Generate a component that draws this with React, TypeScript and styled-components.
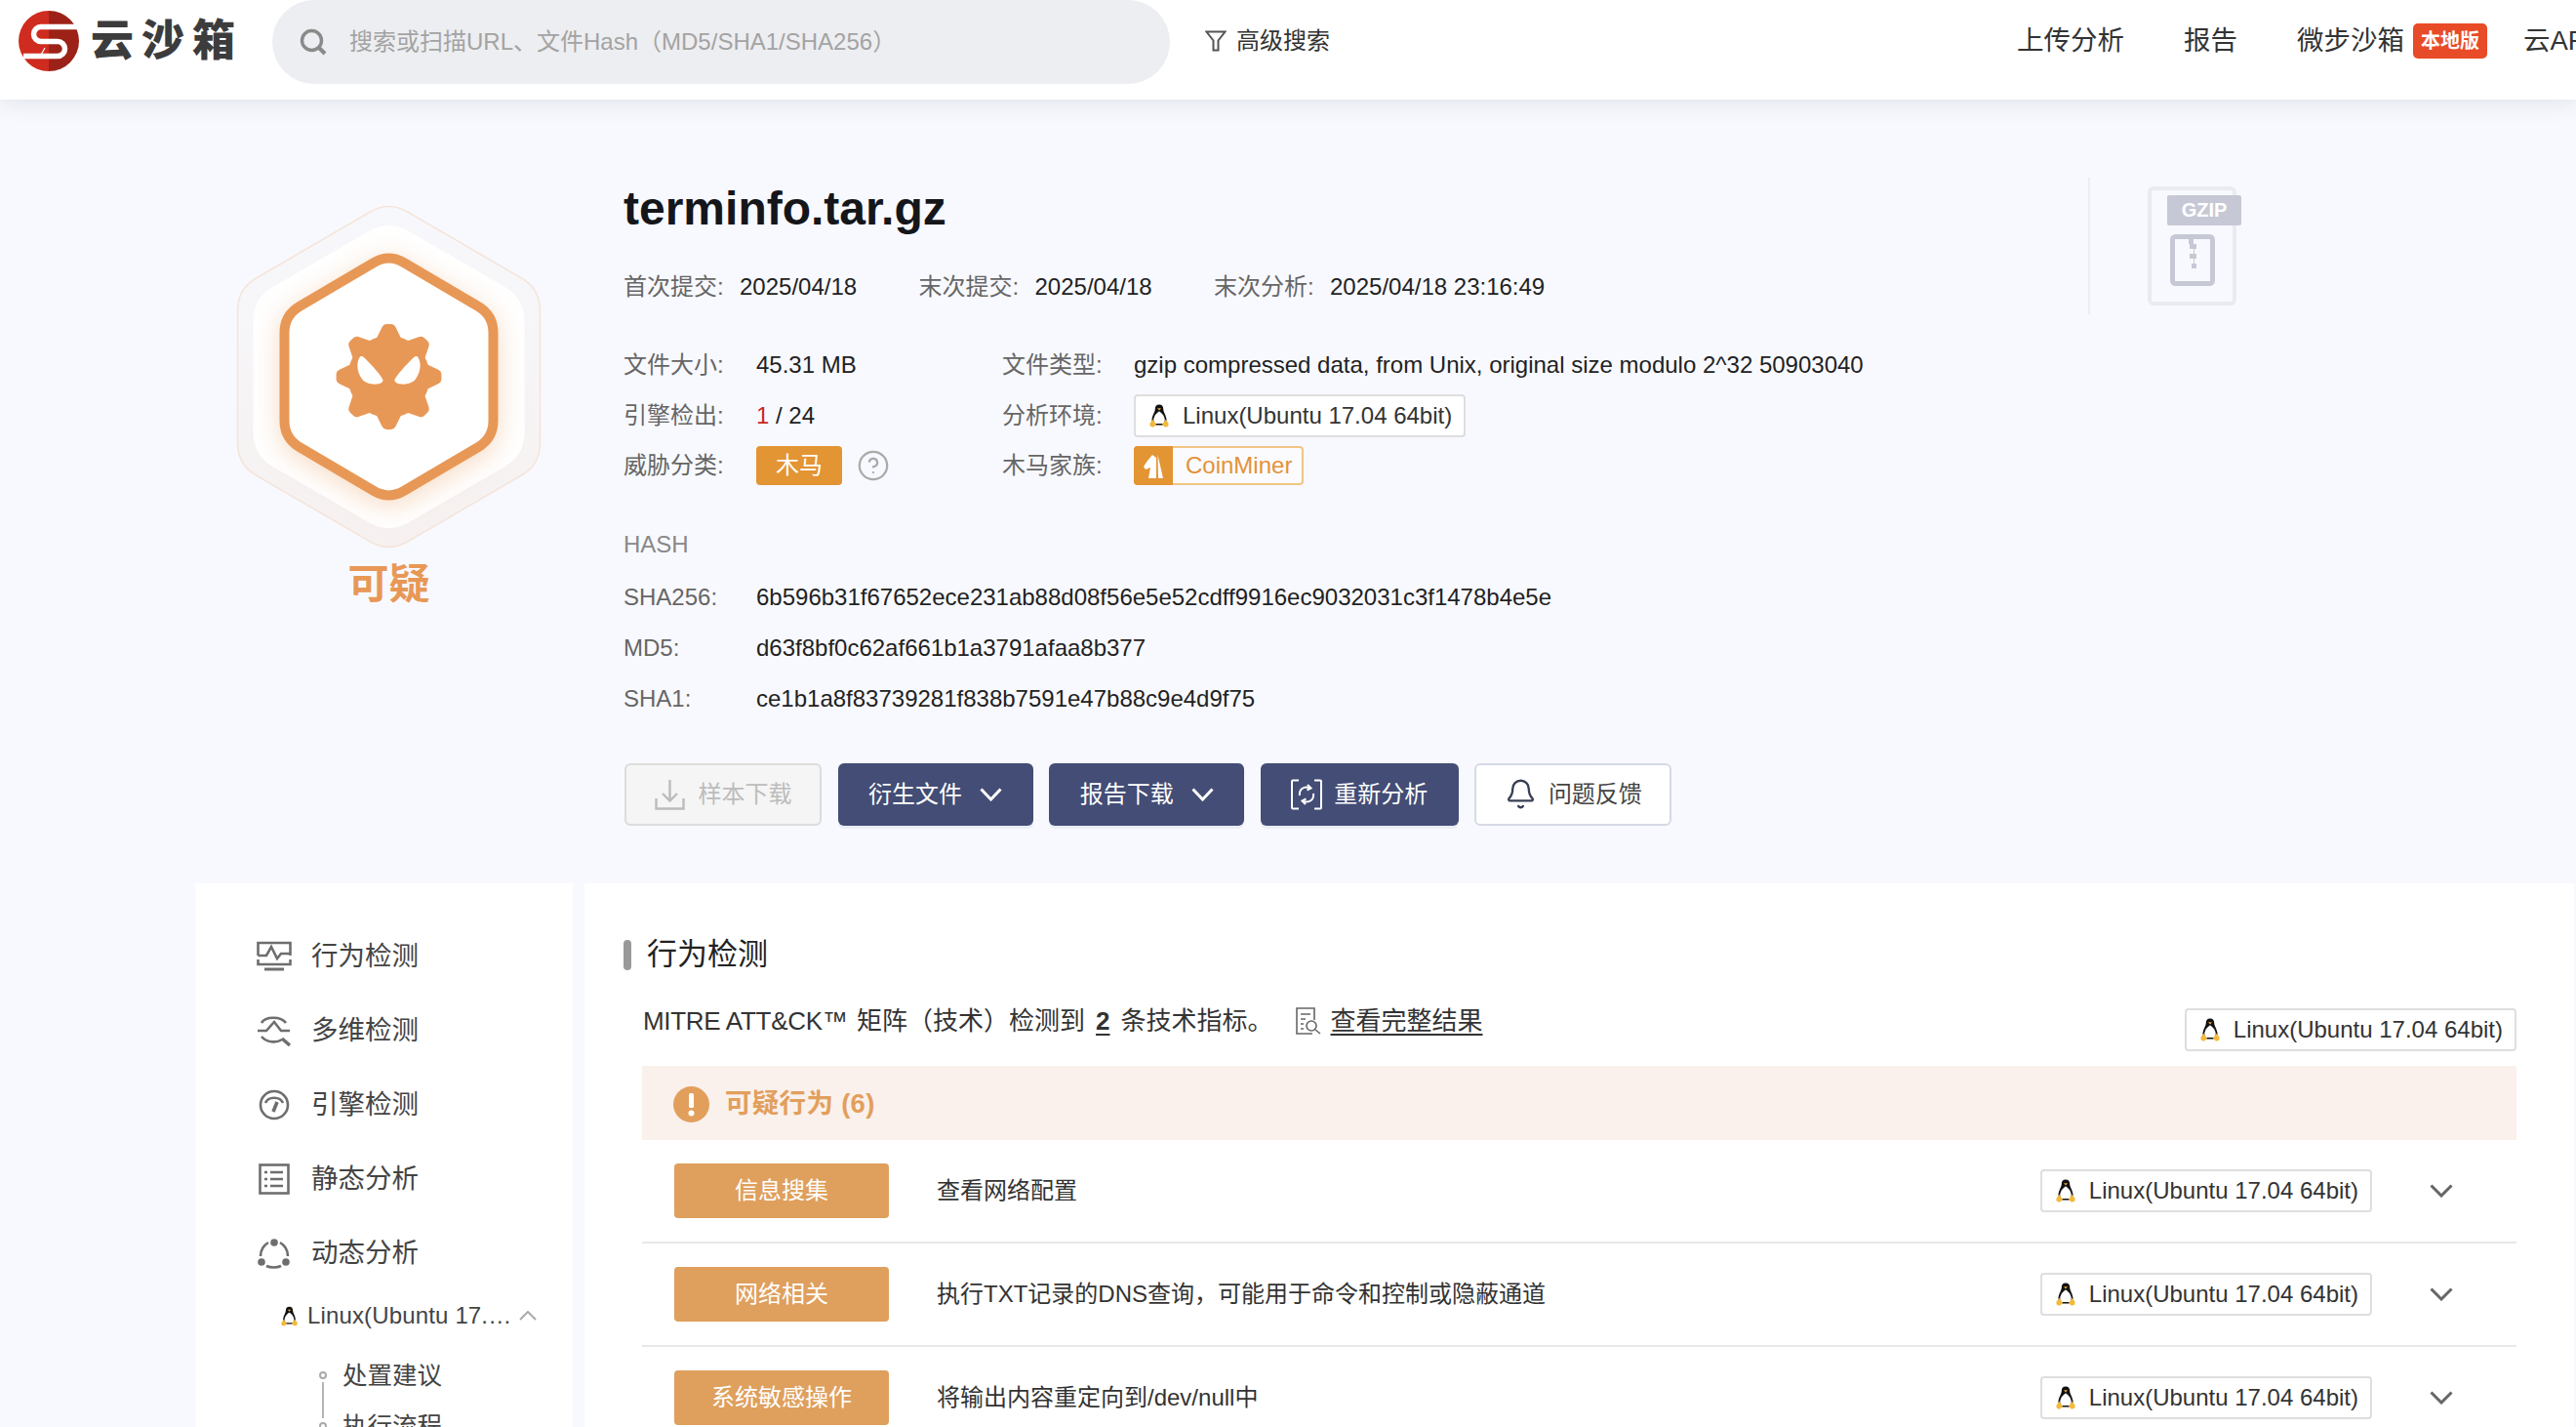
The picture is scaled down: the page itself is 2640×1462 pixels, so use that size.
import React from "react";
import styled, { createGlobalStyle } from "styled-components";
import { Bell, CircleHelp } from "lucide-react";

const Global = createGlobalStyle`
  html, body { margin: 0; padding: 0; background: #f8f9fe; }
  body { font-family: "Liberation Sans", "Noto Sans CJK SC", sans-serif; line-height: 1.25; overflow: hidden; }
  * { box-sizing: border-box; }
`;

const Page = styled.div`
  width: 2640px; height: 1462px; overflow: hidden; background: #f8f9fe; color: #222;
`;

/* ---------- header ---------- */
const Header = styled.header`
  position: relative; z-index: 2; height: 102px; background: #fff; display: flex; align-items: flex-start;
  padding-left: 19px; box-shadow: 0 2px 22px rgba(50, 60, 85, 0.13);
`;
const LogoMark = styled.svg`width: 62px; height: 62px; margin-top: 11px; flex: none;`;
const LogoText = styled.div`
  margin-left: 12px; margin-top: 12px; font-size: 44px; line-height: 60px; font-weight: 900; letter-spacing: 8px; color: #3c3c3c; white-space: nowrap; flex: none; width: 148px;
`;
const Search = styled.div`
  margin-left: 38px; width: 920px; height: 86px; border-radius: 43px; background: #edeef1; display: flex; align-items: center;
  padding-left: 28px; color: #a3a3a3; font-size: 24px; flex: none;
`;
const SearchIcon = styled.svg`width: 28px; height: 28px; margin-right: 23px; flex: none;`;
const Advanced = styled.div`
  margin-left: 36px; display: flex; align-items: center; gap: 10px; height: 84px; font-size: 24px; color: #333; flex: none; white-space: nowrap;
`;
const FunnelIcon = styled.svg`width: 22px; height: 22px; flex: none;`;
const Nav = styled.nav`
  margin-left: 704px; display: flex; align-items: center; height: 84px; gap: 61px; font-size: 27.5px; color: #333; flex: none; white-space: nowrap;
`;
const NavGroup = styled.div`display: flex; align-items: center; gap: 9px;`;
const LocalBadge = styled.span`
  width: 76px; height: 36px; border-radius: 5px; background: #e84b27; color: #fff; font-size: 20px; font-weight: 700;
  display: inline-flex; align-items: center; justify-content: center;
`;
const LastNav = styled.span`margin-left: -24px;`;

/* ---------- hero ---------- */
const Hero = styled.section`
  display: flex; align-items: flex-start; padding: 82px 0 59px 243px; height: 803px;
`;
const Verdict = styled.div`
  width: 311px; margin-top: 26px; flex: none; display: flex; flex-direction: column; align-items: center;
`;
const HexSvg = styled.svg`width: 311px; height: 352px; overflow: visible;`;
const VerdictText = styled.div`
  font-size: 42px; line-height: 56px; font-weight: 700; color: #e89856; margin-top: 9px;
`;
const Info = styled.div`width: 1501px; margin-left: 85px; flex: none;`;
const Title = styled.h1`
  margin: 0; font-size: 48px; line-height: 60px; font-weight: 700; color: #14161a;
`;
const MetaRow = styled.div`display: flex; margin-top: 35px; height: 30px; align-items: center; font-size: 24px;`;
const MetaItem = styled.div`display: flex; width: 302.5px; flex: none; white-space: nowrap;`;
const MetaLabel = styled.span`width: 119px; color: #666; flex: none;`;
const Value = styled.span`color: #222; white-space: nowrap;`;
const InfoGrid = styled.div`
  margin-top: 39.6px; display: grid; grid-template-columns: 136px 252px 135px 1fr; grid-auto-rows: 51.5px; align-items: center; font-size: 24px;
`;
const Label = styled.span`color: #666; white-space: nowrap;`;
const Danger = styled.span`color: #c8281e;`;
const TypeRow = styled.div`display: flex; align-items: center; gap: 15px;`;
const TypeTag = styled.span`
  width: 88px; height: 40px; border-radius: 4px; background: #e39433; color: #fff; display: inline-flex; align-items: center; justify-content: center;
`;
const EnvTag = styled.span`
  display: inline-flex; align-items: center; gap: 14px; height: 44px; padding: 0 12px 0 14px; background: #fff; border: 2px solid #dedede; border-radius: 4px;
  color: #333; font-size: 24px; white-space: nowrap; flex: none; width: fit-content;
`;
const Penguin = styled.svg`width: 20px; height: 24px; flex: none;`;
const FamilyTag = styled.span`
  display: inline-flex; align-items: stretch; height: 40px; width: fit-content; background: #fbfbfd; border: 2px solid #f0c585; border-radius: 4px; color: #e3923a;
`;
const FamilyIcon = styled.span`
  width: 40px; margin: -2px 0 -2px -2px; background: #e39433; border-radius: 4px 0 0 4px; display: flex; align-items: center; justify-content: center;
`;
const FamilyName = styled.span`padding: 0 10px 0 13px; display: flex; align-items: center;`;
const HashTitle = styled.div`margin-top: 28.5px; height: 52px; display: flex; align-items: center; font-size: 24px; color: #888;`;
const HashRow = styled.div`display: flex; height: 52px; align-items: center; font-size: 24px;`;
const HashRows = styled.div`margin-top: 2px;`;
const HashLabel = styled.span`width: 136px; color: #666; flex: none;`;
const Actions = styled.div`display: flex; gap: 16.6px; margin: 40.4px 0 0 1px;`;
const ActionButton = styled.button<{ $kind: "disabled" | "primary" | "outline"; $w: number; $gap: number }>`
  width: ${(p) => p.$w}px; height: 64px; border-radius: 6px; font: inherit; font-size: 24px; display: flex; align-items: center; justify-content: center; gap: ${(p) => p.$gap}px; padding: 0;
  white-space: nowrap;
  background: ${(p) => (p.$kind === "primary" ? "#434d75" : p.$kind === "disabled" ? "#f5f5f5" : "#fff")};
  color: ${(p) => (p.$kind === "primary" ? "#fff" : p.$kind === "disabled" ? "#bcbcbc" : "#444")};
  border: ${(p) => (p.$kind === "primary" ? "none" : p.$kind === "disabled" ? "2px solid #dcdcdc" : "2px solid #d6d9e6")};
  box-shadow: ${(p) => (p.$kind === "primary" ? "0 3px 0 #eaedf6" : "none")};
`;
const ButtonIcon = styled.svg`flex: none;`;
const Aside = styled.aside`
  margin-top: -2px; height: 140px; border-left: 2px solid #ecedf2; padding: 9px 0 0 59px; flex: none;
`;
const FileDoc = styled.div`
  position: relative; width: 91px; height: 122px; border: 4px solid #e9ebf1; border-radius: 6px; display: flex; justify-content: flex-start;
  padding: 45px 0 0 19px;
`;
const FileBadge = styled.span`
  position: absolute; left: 16px; top: 5px; width: 76px; height: 31px; background: #c6c9d5; color: #fff; font-size: 20px; font-weight: 700; border-radius: 2px;
  display: flex; align-items: center; justify-content: center;
`;
const ZipSvg = styled.svg`width: 46px; height: 53px;`;

/* ---------- panels ---------- */
const Main = styled.main`display: flex; gap: 12px; padding-left: 200px;`;
const Sidebar = styled.div`
  width: 387px; height: 557px; background: #fff; flex: none; padding: 37px 0 0 63px; overflow: hidden;
`;
const SideItem = styled.div`
  display: flex; align-items: center; gap: 20px; height: 76px; font-size: 27.5px; color: #444;
`;
const SideIcon = styled.svg`width: 36px; height: 32px; flex: none; fill: none; stroke: #6e6e6e; stroke-width: 2.6;`;
const EnvRow = styled.div`
  display: flex; align-items: center; height: 52px; margin-left: 25px; font-size: 24px; color: #444;
`;
const EnvRowPenguin = styled(Penguin)`width: 17px; height: 21px; margin-right: 10px;`;
const EnvRowText = styled.span`width: 217px; white-space: nowrap; letter-spacing: 0.15px; flex: none;`;
const EnvChevron = styled.svg`width: 18px; height: 10px; fill: none; stroke: #aaa; stroke-width: 2;`;
const SubList = styled.div`margin: 31px 0 0 64px;`;
const SubRow = styled.div`display: flex; height: 52px; gap: 16px; align-items: flex-start;`;
const Rail = styled.div`width: 8px; height: 100%; display: flex; flex-direction: column; align-items: center; flex: none;`;
const RailDot = styled.span`width: 8px; height: 8px; border: 2px solid #aaa; border-radius: 50%; flex: none;`;
const RailLine = styled.span`width: 2px; flex: 1; margin: 3px 0 4px; background: #b5b5b5;`;
const SubText = styled.span`font-size: 25.5px; line-height: 30px; margin-top: -11px; color: #444;`;

const Content = styled.div`
  width: 2039px; height: 557px; background: #fff; flex: none; padding: 53px 59px 0 40px; overflow: hidden;
`;
const SectionTitle = styled.h2`
  margin: 0; display: flex; align-items: center; gap: 16px; height: 40px; font-size: 31px; font-weight: 400; color: #222;
`;
const TitleBar = styled.span`width: 8px; height: 31px; border-radius: 4px; background: #999;`;
const Body = styled.div`margin: 27px 0 0 19px;`;
const Summary = styled.div`display: flex; justify-content: space-between; align-items: flex-start; height: 52px;`;
const SummaryText = styled.div`display: flex; align-items: center; height: 42px; font-size: 26px; color: #333; white-space: nowrap; padding-left: 1px;`;
const MitreName = styled.span`display: inline-block; width: 219px; letter-spacing: -0.3px;`;
const Count = styled.b`text-decoration: underline; text-underline-offset: 4px; margin: 0 11px;`;
const ReportIcon = styled.svg`width: 26px; height: 28px; margin: 0 10px 0 23px; flex: none;`;
const ReportLink = styled.span`text-decoration: underline; text-underline-offset: 4px;`;
const TopEnv = styled.div`margin-top: 8px;`;
const Band = styled.div`
  margin-top: 15px; height: 76px; background: #faf1ec; padding: 2px 0 0 32px; display: flex; align-items: center; gap: 16px;
  color: #e29f5c; font-size: 27.5px; font-weight: 700; letter-spacing: 0.3px;
`;
const AlertIcon = styled.svg`width: 37px; height: 37px; flex: none;`;
const Row = styled.div`
  height: 106px; border-bottom: 2px solid #e8e8e8; display: flex; align-items: center; padding-left: 33px; flex: none;
`;
const Category = styled.span`
  width: 220px; height: 56px; border-radius: 4px; background: #df9f5d; color: #fff; font-size: 24px; flex: none;
  display: flex; align-items: center; justify-content: center;
`;
const Desc = styled.span`margin-left: 49px; flex: 1; font-size: 24px; color: #333; white-space: nowrap;`;
const RowChevron = styled.svg`width: 24px; height: 14px; margin: 0 65px 0 59px; flex: none; fill: none; stroke: #666; stroke-width: 3;`;

/* ---------- drawings ---------- */
function hexPath(W: number, H: number, d: number) {
  const v = [[0, -H], [W, -H / 2], [W, H / 2], [0, H], [-W, H / 2], [-W, -H / 2]];
  let p = "";
  v.forEach((c, i) => {
    const prev = v[(i + 5) % 6];
    const next = v[(i + 1) % 6];
    const toward = (a: number[], b: number[]) => {
      const l = Math.hypot(b[0] - a[0], b[1] - a[1]);
      return [a[0] + ((b[0] - a[0]) * d) / l, a[1] + ((b[1] - a[1]) * d) / l];
    };
    const s = toward(c, prev);
    const e = toward(c, next);
    p += `${i === 0 ? "M" : "L"}${s[0].toFixed(1)} ${s[1].toFixed(1)}Q${c[0]} ${c[1]} ${e[0].toFixed(1)} ${e[1].toFixed(1)}`;
  });
  return p + "Z";
}

function virusPath() {
  const pts: string[] = [];
  const n = 8;
  for (let i = 0; i < n; i++) {
    const a = (i / n) * Math.PI * 2 - Math.PI / 2;
    const tip = 49;
    const w = 0.05;
    const base = 37;
    const b1 = a - 0.24;
    const b2 = a + 0.24;
    pts.push(`${i === 0 ? "M" : "L"}${(base * Math.cos(b1)).toFixed(1)} ${(base * Math.sin(b1)).toFixed(1)}`);
    pts.push(`L${(tip * Math.cos(a - w)).toFixed(1)} ${(tip * Math.sin(a - w)).toFixed(1)}`);
    pts.push(`L${(tip * Math.cos(a + w)).toFixed(1)} ${(tip * Math.sin(a + w)).toFixed(1)}`);
    pts.push(`L${(base * Math.cos(b2)).toFixed(1)} ${(base * Math.sin(b2)).toFixed(1)}`);
  }
  return pts.join("") + "Z";
}

const Tux = ({ as: As = Penguin }: { as?: typeof Penguin }) => (
  <As viewBox="0 0 20 24">
    <path d="M10 .5C7 .5 5.8 2.5 5.8 5C5.8 8 3 11 2.5 15.5C2.2 18 3 20.5 4.5 21.5H15.5C17 20.5 17.8 18 17.5 15.5C17 11 14.2 8 14.2 5C14.2 2.5 13 .5 10 .5Z" fill="#111" />
    <path d="M10 7.5C8.5 8 4.8 11.5 4.3 15.5C4.1 17.5 5 19.5 6 20H14C15 19.5 15.9 17.5 15.7 15.5C15.2 11.5 11.5 8 10 7.5Z" fill="#fff" />
    <path d="M8 4.2H12L10 6.4Z" fill="#f0b030" />
    <path d="M.3 20L3.2 15.8L7.2 21L3.8 23.8L.8 22.8Z" fill="#f2b93b" />
    <path d="M19.7 20L16.8 15.8L12.8 21L16.2 23.8L19.2 22.8Z" fill="#f2b93b" />
  </As>
);

const Chevron = () => (
  <ButtonIcon width="23" height="14" viewBox="0 0 23 14" fill="none" stroke="#fff" strokeWidth="3">
    <path d="M1.5 1.5L11.5 12L21.5 1.5" />
  </ButtonIcon>
);

const EnvBadge = () => (
  <EnvTag>
    <Tux />
    Linux(Ubuntu 17.04 64bit)
  </EnvTag>
);

const rows = [
  ["信息搜集", "查看网络配置"],
  ["网络相关", "执行TXT记录的DNS查询，可能用于命令和控制或隐蔽通道"],
  ["系统敏感操作", "将输出内容重定向到/dev/null中"],
];

const sideIcons = [
  <>
    <path d="M1.5 15V2H34.5V15" />
    <path d="M1.5 15H10L15 6L21 18L25 13H34.5" />
    <path d="M1.5 19V24H34.5V19" />
    <path d="M8 29H28" strokeWidth="3" />
  </>,
  <>
    <path d="M5 8C9 1 25 1 30 8" />
    <path d="M1 16H10L18 7L25 16H34" />
    <path d="M5 22C10 28 20 29 26 25" />
    <path d="M26 24L34 31" strokeWidth="3.4" />
  </>,
  <>
    <circle cx="18" cy="16" r="14" />
    <path d="M9 14C12 7 24 7 27 14" />
    <path d="M21 13L17 23" strokeWidth="3.6" />
  </>,
  <>
    <rect x="3.5" y="1.5" width="29" height="29" />
    <path d="M14 9H27M14 16H27M14 23H27" />
    <path d="M8 9H11M8 16H11M8 23H11" />
  </>,
  <>
    <circle cx="18" cy="5" r="3.8" fill="#6e6e6e" stroke="none" />
    <circle cx="5" cy="25" r="3.8" fill="#6e6e6e" stroke="none" />
    <circle cx="30" cy="25" r="3.8" fill="#6e6e6e" stroke="none" />
    <path d="M12 5C7 8 4 13 4 19" />
    <path d="M24 5C29 8 32 13 32 19" />
    <path d="M10 29C14 31 21 31 25 29" />
  </>,
];

const sideLabels = ["行为检测", "多维检测", "引擎检测", "静态分析", "动态分析"];

export default function App() {
  return (
    <Page>
      <Global />
      <Header>
        <LogoMark viewBox="0 0 62 62">
          <path d="M31 0A31 31 0 0 0 31 62Z" fill="#cf2b1e" />
          <path d="M31 0A31 31 0 0 1 31 62Z" fill="#9c2218" />
          <path d="M60 16.5H23A7.5 7.5 0 0 0 23 31.5H40A7.5 7.5 0 0 1 40 46.5H5" fill="none" stroke="#fff" strokeWidth="5.5" />
          <path d="M27 38L22 47" stroke="#fff" strokeWidth="1.2" />
        </LogoMark>
        <LogoText>云沙箱</LogoText>
        <Search>
          <SearchIcon viewBox="0 0 28 28" fill="none" stroke="#8a8a8a" strokeWidth="3.4">
            <circle cx="12.5" cy="12.5" r="10" />
            <path d="M20 20L26 26" strokeWidth="4" />
          </SearchIcon>
          搜索或扫描URL、文件Hash（MD5/SHA1/SHA256）
        </Search>
        <Advanced>
          <FunnelIcon viewBox="0 0 22 22" fill="none" stroke="#555" strokeWidth="2">
            <path d="M1.5 1.5H20.5L13.5 10.5V20.5H8.5V10.5Z" />
          </FunnelIcon>
          高级搜索
        </Advanced>
        <Nav>
          <span>上传分析</span>
          <span>报告</span>
          <NavGroup>
            微步沙箱
            <LocalBadge>本地版</LocalBadge>
          </NavGroup>
          <LastNav>云API</LastNav>
        </Nav>
      </Header>

      <Hero>
        <Verdict>
          <HexSvg viewBox="-155.5 -176 311 352">
            <defs>
              <linearGradient id="outerFill" x1="0" y1="0" x2="0" y2="1">
                <stop offset="0" stopColor="#f7f8fc" />
                <stop offset="1" stopColor="#f6f1f0" />
              </linearGradient>
            </defs>
            <path d={hexPath(155, 180, 22)} fill="url(#outerFill)" stroke="#f5e5da" strokeWidth="1.6" />
            <path d={hexPath(139, 161, 24)} fill="#fff" />
            <path
              d={hexPath(107, 126, 18)}
              fill="#fff"
              stroke="#e89856"
              strokeWidth="10"
              style={{ filter: "drop-shadow(0 6px 14px rgba(232,152,86,.35))" }}
            />
            <g fill="#e89856" stroke="#e89856" strokeWidth="10" strokeLinejoin="round">
              <path d={virusPath()} />
            </g>
            <circle r="42" fill="#e89856" />
            <g transform="translate(-54 -54)" fill="#fff">
              <path d="M25 33C21 37 20 48 27 57C32 63 47 63 48 58C49 55 32 37 27 33Z" />
              <path d="M83 33C87 37 88 48 81 57C76 63 61 63 60 58C59 55 76 37 81 33Z" />
            </g>
          </HexSvg>
          <VerdictText>可疑</VerdictText>
        </Verdict>

        <Info>
          <Title>terminfo.tar.gz</Title>
          <MetaRow>
            <MetaItem><MetaLabel>首次提交:</MetaLabel><Value>2025/04/18</Value></MetaItem>
            <MetaItem><MetaLabel>末次提交:</MetaLabel><Value>2025/04/18</Value></MetaItem>
            <MetaItem><MetaLabel>末次分析:</MetaLabel><Value>2025/04/18 23:16:49</Value></MetaItem>
          </MetaRow>
          <InfoGrid>
            <Label>文件大小:</Label>
            <Value>45.31 MB</Value>
            <Label>文件类型:</Label>
            <Value>gzip compressed data, from Unix, original size modulo 2^32 50903040</Value>
            <Label>引擎检出:</Label>
            <Value><Danger>1</Danger> / 24</Value>
            <Label>分析环境:</Label>
            <EnvBadge />
            <Label>威胁分类:</Label>
            <TypeRow>
              <TypeTag>木马</TypeTag>
              <CircleHelp size={34} color="#aaa" strokeWidth={1.6} />
            </TypeRow>
            <Label>木马家族:</Label>
            <FamilyTag>
              <FamilyIcon>
                <svg width="21" height="25" viewBox="0 0 21 25" fill="#fff">
                  <path d="M9 1L4 7L0 13L2 16L7 14L5 25H13V4Z" />
                  <path d="M14.5 1L20 25H15Z" />
                </svg>
              </FamilyIcon>
              <FamilyName>CoinMiner</FamilyName>
            </FamilyTag>
          </InfoGrid>
          <HashTitle>HASH</HashTitle>
          <HashRows>
            <HashRow><HashLabel>SHA256:</HashLabel><Value>6b596b31f67652ece231ab88d08f56e5e52cdff9916ec9032031c3f1478b4e5e</Value></HashRow>
            <HashRow><HashLabel>MD5:</HashLabel><Value>d63f8bf0c62af661b1a3791afaa8b377</Value></HashRow>
            <HashRow><HashLabel>SHA1:</HashLabel><Value>ce1b1a8f83739281f838b7591e47b88c9e4d9f75</Value></HashRow>
          </HashRows>
          <Actions>
            <ActionButton $kind="disabled" $w={202} $gap={14}>
              <ButtonIcon width="31" height="32" viewBox="0 0 31 32" fill="none" stroke="#bcbcbc" strokeWidth="2.4">
                <path d="M15.5 1V22M8 15L15.5 22.5L23 15M1.5 20V30.5H29.5V20" />
              </ButtonIcon>
              样本下载
            </ActionButton>
            <ActionButton $kind="primary" $w={200} $gap={18}>衍生文件<Chevron /></ActionButton>
            <ActionButton $kind="primary" $w={200} $gap={18}>报告下载<Chevron /></ActionButton>
            <ActionButton $kind="primary" $w={203} $gap={12}>
              <ButtonIcon width="32" height="32" viewBox="0 0 32 32" fill="none" stroke="#fff" strokeWidth="2">
                <path d="M8 1.5H2C1.5 1.5 1 2 1 2.5V29.5C1 30 1.5 30.5 2 30.5H8M24 1.5H30C30.5 1.5 31 2 31 2.5V29.5C31 30 30.5 30.5 30 30.5H24" />
                <path d="M9 17C8 11 13 7 19 9M23 15C24 21 19 25 13 23" />
                <path d="M17 6L20.5 9.5L16.5 11.5M15 26L11.5 22.5L15.5 20.5" />
              </ButtonIcon>
              重新分析
            </ActionButton>
            <ActionButton $kind="outline" $w={202} $gap={12}>
              <Bell size={33} color="#3a3f55" strokeWidth={1.7} />
              问题反馈
            </ActionButton>
          </Actions>
        </Info>

        <Aside>
          <FileDoc>
            <FileBadge>GZIP</FileBadge>
            <ZipSvg viewBox="0 0 46 53" fill="none">
              <rect x="2.5" y="2.5" width="41" height="48" rx="3" stroke="#c6c9d5" strokeWidth="5" />
              <path d="M19 5H24V10H27V15H24V20H27V25H24V30H27V35H22V30H25V25H20V20H25V15H20V10H19Z" fill="#c6c9d5" />
            </ZipSvg>
          </FileDoc>
        </Aside>
      </Hero>

      <Main>
        <Sidebar>
          {sideLabels.map((t, i) => (
            <SideItem key={t}>
              <SideIcon viewBox="0 0 36 32">{sideIcons[i]}</SideIcon>
              {t}
            </SideItem>
          ))}
          <EnvRow>
            <Tux as={EnvRowPenguin as unknown as typeof Penguin} />
            <EnvRowText>Linux(Ubuntu 17.…</EnvRowText>
            <EnvChevron viewBox="0 0 18 10"><path d="M1 9L9 1L17 9" /></EnvChevron>
          </EnvRow>
          <SubList>
            <SubRow>
              <Rail><RailDot /><RailLine /></Rail>
              <SubText>处置建议</SubText>
            </SubRow>
            <SubRow>
              <Rail><RailDot /><RailLine /></Rail>
              <SubText>执行流程</SubText>
            </SubRow>
          </SubList>
        </Sidebar>

        <Content>
          <SectionTitle><TitleBar />行为检测</SectionTitle>
          <Body>
            <Summary>
              <SummaryText>
                <MitreName>MITRE ATT&amp;CK™</MitreName>矩阵（技术）检测到<Count>2</Count>条技术指标。
                <ReportIcon viewBox="0 0 26 28" fill="none" stroke="#666" strokeWidth="1.6">
                  <path d="M17 27H1V1H19V13" />
                  <path d="M5 7H15M5 12H10M5 17H8M5 22H8" />
                  <circle cx="16" cy="19" r="5" />
                  <path d="M20 23L25 27" />
                </ReportIcon>
                <ReportLink>查看完整结果</ReportLink>
              </SummaryText>
              <TopEnv><EnvBadge /></TopEnv>
            </Summary>
            <Band>
              <AlertIcon viewBox="0 0 37 37">
                <circle cx="18.5" cy="18.5" r="18.5" fill="#e29f5c" />
                <rect x="16" y="7" width="5" height="15" rx="1.5" fill="#fff" />
                <circle cx="18.5" cy="27.5" r="3" fill="#fff" />
              </AlertIcon>
              可疑行为 (6)
            </Band>
            {rows.map(([c, d]) => (
              <Row key={c}>
                <Category>{c}</Category>
                <Desc>{d}</Desc>
                <EnvBadge />
                <RowChevron viewBox="0 0 24 14"><path d="M1.5 1.5L12 12L22.5 1.5" /></RowChevron>
              </Row>
            ))}
          </Body>
        </Content>
      </Main>
    </Page>
  );
}
